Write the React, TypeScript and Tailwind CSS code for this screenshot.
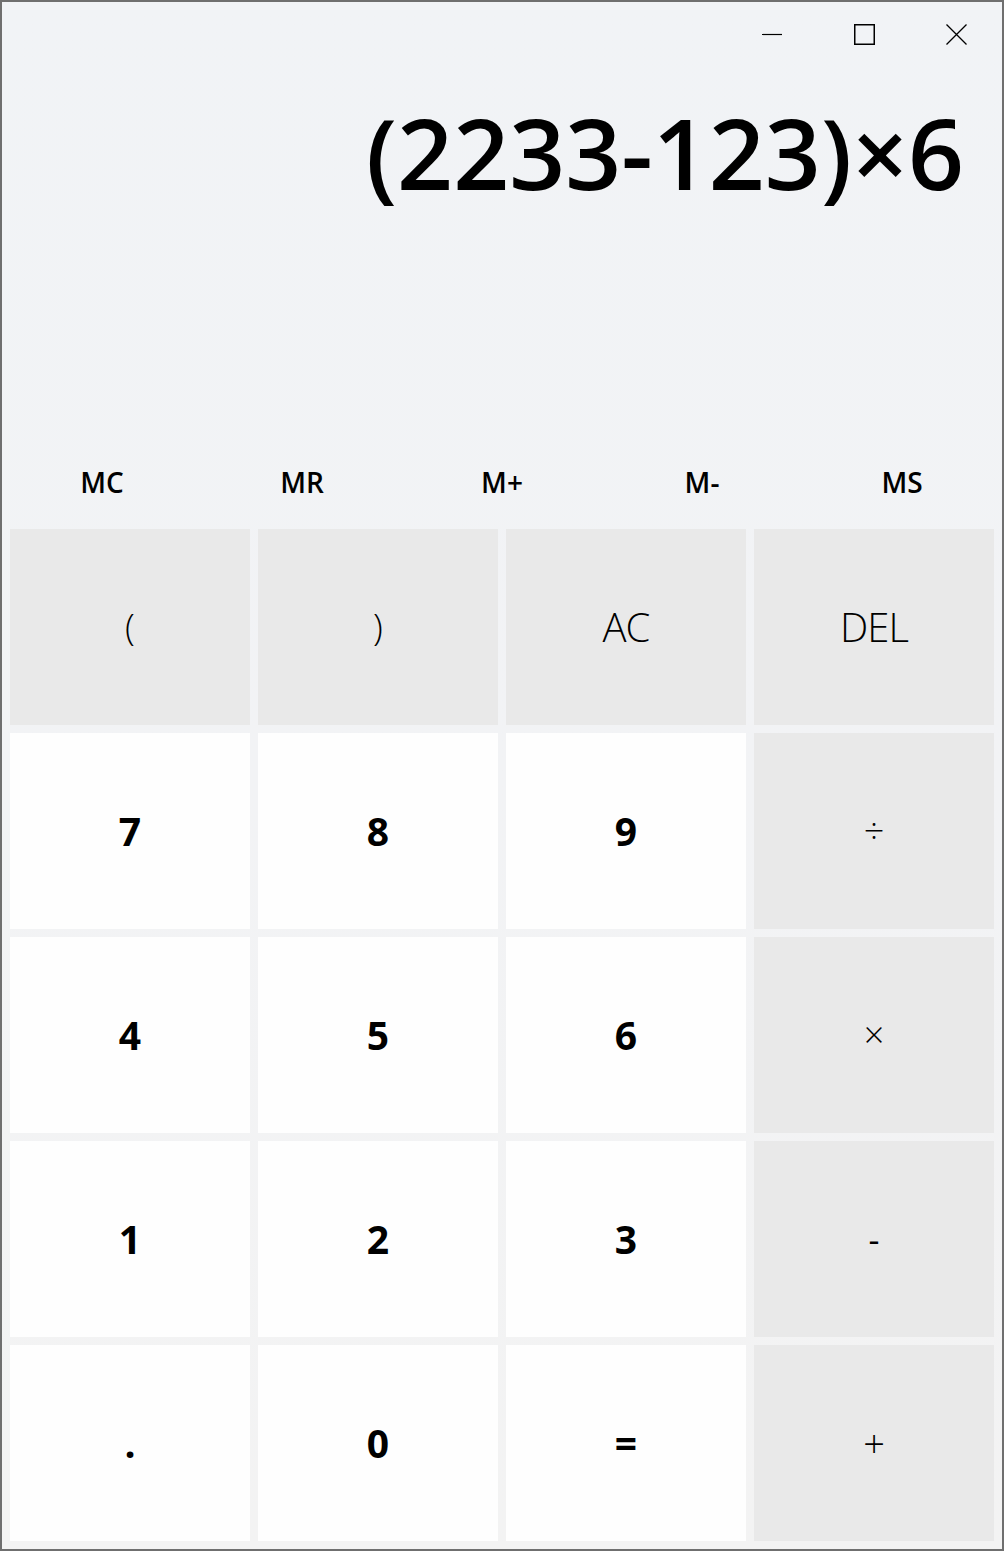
const font = { fontFamily: '"Open Sans", "Noto Sans", sans-serif' }

type Key = {
  label: string
  kind: 'fn' | 'num' | 'op'
  size: string
}

const memory = ['MC', 'MR', 'M+', 'M-', 'MS']

const keys: Key[] = [
  { label: '(', kind: 'fn', size: 'text-[36px] font-light' },
  { label: ')', kind: 'fn', size: 'text-[36px] font-light' },
  { label: 'AC', kind: 'fn', size: 'text-[40px] font-light tracking-tight' },
  { label: 'DEL', kind: 'fn', size: 'text-[40px] font-light tracking-tight' },
  { label: '7', kind: 'num', size: 'text-[39px] font-bold' },
  { label: '8', kind: 'num', size: 'text-[39px] font-bold' },
  { label: '9', kind: 'num', size: 'text-[39px] font-bold' },
  { label: '÷', kind: 'op', size: 'text-[36px] font-light' },
  { label: '4', kind: 'num', size: 'text-[39px] font-bold' },
  { label: '5', kind: 'num', size: 'text-[39px] font-bold' },
  { label: '6', kind: 'num', size: 'text-[39px] font-bold' },
  { label: '×', kind: 'op', size: 'text-[36px] font-light' },
  { label: '1', kind: 'num', size: 'text-[39px] font-bold' },
  { label: '2', kind: 'num', size: 'text-[39px] font-bold' },
  { label: '3', kind: 'num', size: 'text-[39px] font-bold' },
  { label: '-', kind: 'op', size: 'text-[34px] font-normal' },
  { label: '.', kind: 'num', size: 'text-[39px] font-bold' },
  { label: '0', kind: 'num', size: 'text-[39px] font-bold' },
  { label: '=', kind: 'num', size: 'text-[39px] font-bold' },
  { label: '+', kind: 'op', size: 'text-[38px] font-light' },
]

function TitleBar() {
  return (
    <div className="flex h-[64px] justify-end">
      <button className="flex w-[92px] items-center justify-center">
        <svg width="20" height="20" viewBox="0 0 20 20">
          <line x1="0" y1="10.5" x2="20" y2="10.5" stroke="#000" strokeWidth="1.2" />
        </svg>
      </button>
      <button className="flex w-[92px] items-center justify-center">
        <svg width="21" height="21" viewBox="0 0 21 21">
          <rect x="0.75" y="0.75" width="19.5" height="19.5" fill="none" stroke="#000" strokeWidth="1.5" />
        </svg>
      </button>
      <button className="flex w-[92px] items-center justify-center">
        <svg width="21" height="21" viewBox="0 0 21 21">
          <path d="M0.5 0.5 L20.5 20.5 M20.5 0.5 L0.5 20.5" stroke="#000" strokeWidth="1.3" />
        </svg>
      </button>
    </div>
  )
}

export default function App() {
  return (
    <div
      className="flex h-[1551px] w-[1004px] flex-col border-2 border-[#6f6f6f] bg-gradient-to-b from-[#f1f3f6] via-[#f2f3f5] to-[#f3f3f3] text-black"
      style={font}
    >
      <TitleBar />

      {/* Expression display */}
      <div className="flex h-[366px] items-start justify-end pr-[38px] pt-[37px]">
        <div className="text-[98px] font-semibold leading-none">(2233-123)×6</div>
      </div>

      {/* Memory row */}
      <div className="grid h-[80px] grid-cols-5 pt-[20px]">
        {memory.map((m) => (
          <button key={m} className="flex items-center justify-center text-[28px] font-semibold">
            {m}
          </button>
        ))}
      </div>

      {/* Keypad */}
      <div className="grid grid-cols-4 gap-2 px-2 pb-2 pt-[17px]">
        {keys.map((k) => (
          <button
            key={k.label}
            className={`flex h-[196px] items-center justify-center ${k.size} ${
              k.kind === 'num' ? 'bg-[#fefefe]' : 'bg-[#e9e9e9]'
            }`}
          >
            {k.label}
          </button>
        ))}
      </div>
    </div>
  )
}
